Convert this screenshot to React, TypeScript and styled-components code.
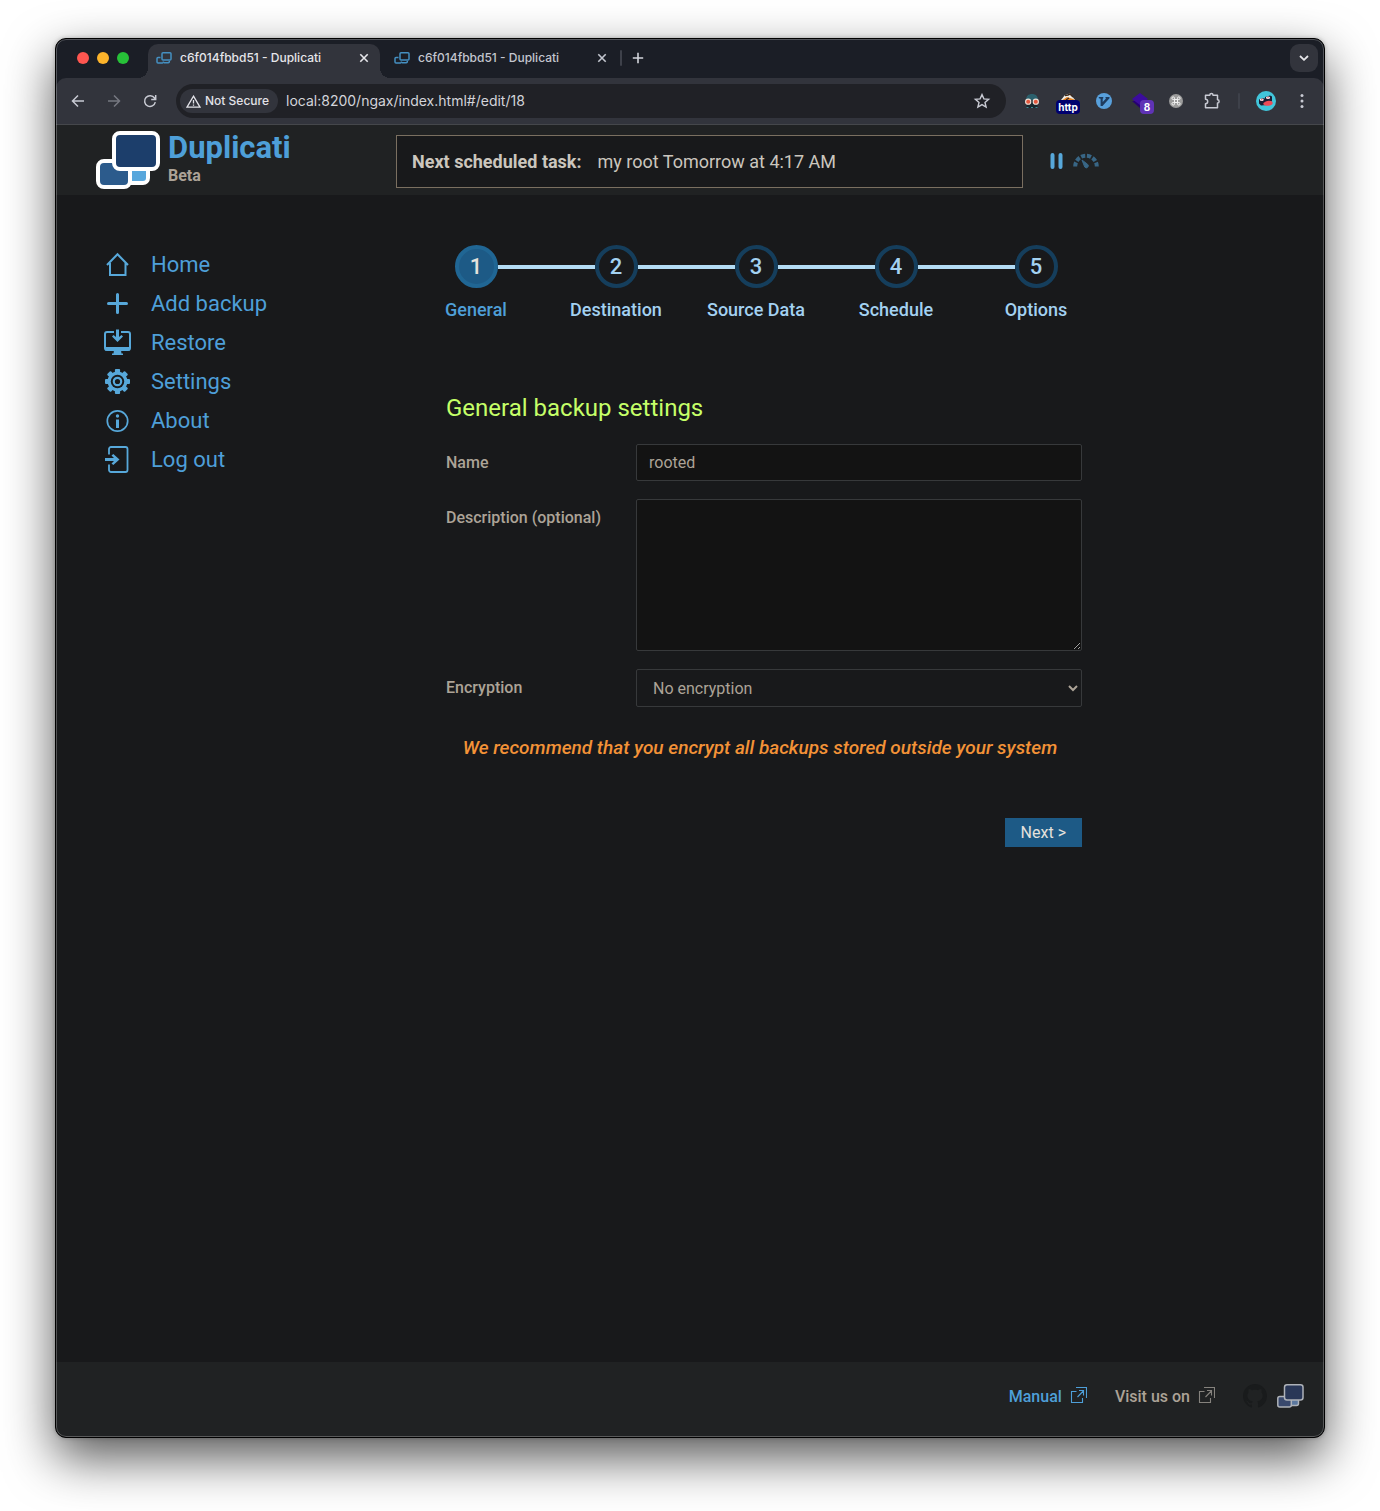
import React from "react";
import styled, { createGlobalStyle, css } from "styled-components";

const GlobalStyle = createGlobalStyle`
  *, *::before, *::after { box-sizing: border-box; }
  body { margin: 0; background: #fff; }
  button, input, select, textarea { font: inherit; color: inherit; margin: 0; }
  button { background: none; border: 0; padding: 0; cursor: pointer; }
  a { text-decoration: none; color: inherit; }
  svg { display: block; flex: none; }
`;

const chromeFont = `Inter, "Liberation Sans", sans-serif`;
const pageFont = `Roboto, "Noto Sans", sans-serif`;
const blue = "#4e9fd8";
const iconBlue = "#57a8da";

const Desktop = styled.div`
  min-height: 100vh;
  padding: 38px 55px 73px;
  display: flex;
  overflow: hidden;
`;

const Window = styled.div`
  flex: 1;
  min-width: 0;
  display: flex;
  flex-direction: column;
  border: 1px solid #000;
  border-radius: 11px;
  background: #18191b;
  box-shadow: 0 20px 50px rgba(0, 0, 0, 0.66), 0 0 4px rgba(0, 0, 0, 0.25);
  overflow: hidden;
  position: relative;

  &::after {
    content: "";
    position: absolute;
    inset: 0;
    border: 1px solid rgba(255, 255, 255, 0.25);
    border-radius: 10px;
    pointer-events: none;
  }
`;

/* Browser frame */

const TabStrip = styled.div`
  display: flex;
  align-items: center;
  height: 39px;
  padding: 0 6px 2px 21px;
  background: #1b1e26;
  font: 500 12px/16px ${chromeFont};
`;

const Lights = styled.div`
  display: flex;
  gap: 8px;
  width: 71px;
`;

const Light = styled.button<{ $color: string }>`
  width: 12px;
  height: 12px;
  border-radius: 50%;
  background: ${(p) => p.$color};
`;

const Tab = styled.div<{ $active?: boolean }>`
  display: flex;
  align-items: center;
  align-self: flex-end;
  gap: 8px;
  width: 232px;
  height: 34px;
  margin-bottom: -2px;
  padding: 0 10px 6px 8px;
  color: #c3c6cf;
  ${(p) =>
    p.$active &&
    css`
      position: relative;
      color: #e6e6ea;
      background: #32343c;
      border-radius: 10px 10px 0 0;
      &::before,
      &::after {
        content: "";
        position: absolute;
        bottom: 0;
        width: 10px;
        height: 10px;
      }
      &::before {
        left: -10px;
        background: radial-gradient(circle at 0 0, transparent 10px, #32343c 10px);
      }
      &::after {
        right: -10px;
        background: radial-gradient(circle at 100% 0, transparent 10px, #32343c 10px);
      }
    `}
`;

const TabTitle = styled.span`
  flex: 1;
  white-space: nowrap;
`;

const TabGap = styled.span`
  width: 6px;
`;

const NewTab = styled.button`
  padding: 6px 8px;
`;

const Divider = styled.span<{ $gap: number }>`
  width: 2px;
  height: 16px;
  margin: 0 ${(p) => p.$gap}px;
  border-radius: 1px;
  background: #3e414a;
`;

const TabMenu = styled.button`
  display: grid;
  place-items: center;
  width: 28px;
  height: 28px;
  margin-left: auto;
  border-radius: 9px;
  background: #32343c;
  color: #e6e6ea;
`;

const ToolbarBack = styled.div`
  background: #1b1e26;
`;

const Toolbar = styled.div`
  display: flex;
  align-items: center;
  height: 47px;
  padding: 0 12px;
  border-bottom: 1px solid #45474b;
  border-radius: 10px 10px 0 0;
  background: #32343c;
  color: #c8cad3;
  font-family: ${chromeFont};
`;

const NavButtons = styled.div`
  display: flex;
  gap: 16px;
`;

const IconButton = styled.button<{ $dim?: boolean }>`
  display: grid;
  place-items: center;
  position: relative;
  width: 20px;
  height: 24px;
  opacity: ${(p) => (p.$dim ? 0.45 : 1)};
`;

const AddressBar = styled.div`
  display: flex;
  align-items: center;
  flex: 1;
  gap: 8px;
  height: 34px;
  margin: 0 16px;
  padding: 0 14px 0 4px;
  border-radius: 17px;
  background: #202126;
`;

const Security = styled.button`
  display: flex;
  align-items: center;
  gap: 4px;
  height: 24px;
  padding: 0 9px 0 6px;
  border-radius: 12px;
  background: #32343c;
  color: #e2e2e8;
  font: 500 12px/16px ${chromeFont};
  white-space: nowrap;
`;

const Url = styled.input`
  flex: 1;
  min-width: 0;
  padding: 0;
  border: 0;
  outline: 0;
  background: none;
  color: #d3d4da;
  font: 400 14px/20px ${chromeFont};
`;

const Extensions = styled.div`
  display: flex;
  align-items: center;
  gap: 16px;
`;

const Badge = styled.span<{ $color: string; $wide?: boolean }>`
  position: absolute;
  top: 11px;
  left: ${(p) => (p.$wide ? -2 : 10)}px;
  width: ${(p) => (p.$wide ? 24 : 14)}px;
  height: 14px;
  border-radius: 4px;
  background: ${(p) => p.$color};
  color: #fff;
  font: 700 10px/14px ${chromeFont};
  text-align: center;
`;

const Profile = styled.div`
  display: flex;
  align-items: center;
  gap: 16px;
`;

/* Application */

const Page = styled.div`
  flex: 1;
  display: flex;
  flex-direction: column;
  font-family: ${pageFont};
  font-size: 16px;
  line-height: 20px;
  color: #aca397;
`;

const Header = styled.header`
  display: flex;
  align-items: center;
  min-height: 70px;
  padding: 2px 40px 0;
  background: #202223;
`;

const Brand = styled.a`
  display: flex;
  gap: 8px;
  width: 300px;
  padding-bottom: 2px;
`;

const BrandName = styled.span`
  display: block;
  color: ${blue};
  font-size: 31px;
  font-weight: 700;
  line-height: 34px;
`;

const BrandChannel = styled.span`
  display: block;
  font-size: 16px;
  font-weight: 700;
  line-height: 22px;
`;

const Status = styled.div`
  display: flex;
  align-items: center;
  gap: 16px;
  flex: 1;
  max-width: 627px;
  min-height: 53px;
  padding: 2px 15px 0;
  border: 1px solid #7a6f60;
  background: #18191b;
  color: #cbc6be;
  font-size: 18px;
  line-height: 24px;
`;

const HeaderActions = styled.div`
  display: flex;
  align-items: center;
  gap: 10px;
  margin-left: 27px;
  color: ${iconBlue};
`;

const Body = styled.div`
  flex: 1;
  display: flex;
  padding: 50px 40px;
`;

const Side = styled.nav`
  width: 310px;
`;

const SideList = styled.ul`
  list-style: none;
  margin: 0;
  padding: 0;
`;

const SideLink = styled.a`
  display: flex;
  align-items: center;
  gap: 20px;
  height: 39px;
  padding-left: 8px;
  color: ${blue};
  font-size: 22px;

  svg {
    color: ${iconBlue};
  }
`;

const Main = styled.main`
  flex: 1;
  max-width: 700px;
`;

const Steps = styled.ol`
  display: grid;
  grid-template-columns: repeat(5, 1fr);
  list-style: none;
  margin: 0;
  padding: 0;
`;

const StepRail = styled.span`
  display: flex;
  align-items: center;
  width: 100%;
`;

const Rail = styled.span<{ $hidden: boolean }>`
  flex: 1;
  height: 4px;
  background: ${(p) => (p.$hidden ? "transparent" : "#b3dcf5")};
`;

const StepDot = styled.span<{ $active: boolean }>`
  display: grid;
  place-items: center;
  width: 43px;
  height: 43px;
  border: 4px solid ${(p) => (p.$active ? "#206694" : "#153e5c")};
  border-radius: 50%;
  background: ${(p) => (p.$active ? "#1d5a86" : "transparent")};
  color: ${(p) => (p.$active ? "#e4e1dc" : "#a3d1f1")};
  font-size: 22px;
`;

const StepButton = styled.button<{ $active: boolean }>`
  display: flex;
  flex-direction: column;
  align-items: center;
  gap: 12px;
  width: 100%;
  color: ${(p) => (p.$active ? blue : "#a3d1f1")};
  font-size: 18px;
  font-weight: 500;
  line-height: 20px;
`;

const Form = styled.form`
  display: flex;
  flex-direction: column;
  gap: 18px;
  padding: 73px 24px 0 40px;
`;

const Heading = styled.h2`
  margin: 0 0 3px;
  color: #c5ff68;
  font-size: 24px;
  font-weight: 400;
  line-height: 30px;
`;

const Field = styled.div`
  display: grid;
  grid-template-columns: 190px 1fr;
  align-items: start;
`;

const Label = styled.label`
  padding-top: 9px;
  font-weight: 500;
`;

const control = css`
  display: block;
  width: 100%;
  border: 1px solid #37393b;
  border-radius: 2px;
  background: #131313;
  outline: 0;
`;

const TextInput = styled.input`
  ${control}
  height: 37px;
  padding: 0 12px;
`;

const TextArea = styled.textarea`
  ${control}
  height: 152px;
  padding: 8px 12px;
  resize: both;
  color-scheme: dark;
`;

const Select = styled.select`
  ${control}
  height: 38px;
  padding: 0 0 0 12px;
  background: #18191b;
`;

const Warning = styled.p`
  margin: 10px 0 0;
  padding-right: 8px;
  color: #f39237;
  font-size: 19px;
  font-style: italic;
  font-weight: 500;
  line-height: 26px;
  text-align: center;
`;

const NextButton = styled.button`
  align-self: flex-end;
  height: 29px;
  margin-top: 39px;
  padding: 0 16px;
  background: #1d5a86;
  color: #e4e1dc;
`;

const Footer = styled.footer`
  display: flex;
  align-items: center;
  justify-content: flex-end;
  gap: 28px;
  min-height: 75px;
  padding: 0 20px 8px;
  background: #202223;
`;

const footerText = css`
  display: flex;
  align-items: center;
  gap: 8px;
  font-weight: 500;
  line-height: 24px;

  span {
    padding-top: 2px;
  }
`;

const FooterItem = styled.span`
  ${footerText}
`;

const FooterLink = styled.a`
  ${footerText}
  color: ${blue};
`;

const Socials = styled.div`
  display: flex;
  align-items: center;
  gap: 10px;
`;

/* Icons */

const Favicon = () => (
  <svg width="16" height="16" viewBox="0 0 16 16" fill="none" stroke="#4590c2" strokeWidth="1.5">
    <rect x="6" y="2.8" width="9" height="7.2" rx="1" />
    <path d="M4.5 7.5H2a1 1 0 0 0-1 1V12a1 1 0 0 0 1 1h4.400a1 1 0 0 0 1-1v-.5M8 12.800h4.300a1 1 0 0 0 1-1V11" />
  </svg>
);

const Cross = () => (
  <svg width="12" height="12" viewBox="0 0 12 12" stroke="currentColor" strokeWidth="1.6">
    <path d="M2.3 2.3l7.4 7.4M9.7 2.3L2.3 9.7" />
  </svg>
);

const Logo = () => (
  <svg width="64" height="58" viewBox="0 0 64 58" stroke="#fff" strokeWidth="4">
    <rect x="26" y="30" width="26" height="22" rx="5" fill="#58a7dc" />
    <rect x="2" y="30" width="32" height="26" rx="6" fill="#2c5b8c" />
    <rect x="18" y="2" width="44" height="36" rx="6" fill="#1c3e6b" />
  </svg>
);

const ExternalIcon = ({ color }: { color: string }) => (
  <svg width="17" height="20" viewBox="0 0 17 20" fill="none" stroke={color} strokeWidth="1.1">
    <path d="M6.500 5.500H1.500v11h11V12M6 1.500h10.500v10.500M7.500 11l5.800-6M9 4.500h4.500v5" />
  </svg>
);

const icons: Record<string, React.ReactNode> = {
  home: (
    <path d="M3 14L13.500 3.200 24 14M6 12v12h15.500V12" fill="none" stroke="currentColor" strokeWidth="2" />
  ),
  add: (
    <path d="M13.500 4.500v18M4.500 13.500h18" stroke="currentColor" strokeWidth="3" strokeLinecap="round" />
  ),
  restore: (
    <>
      <path d="M10 3H3a2 2 0 0 0-2 2v14a2 2 0 0 0 2 2h21a2 2 0 0 0 2-2V5a2 2 0 0 0-2-2h-7" fill="none" stroke="currentColor" strokeWidth="2" />
      <path d="M1 18h25v3.500H1zM10 21h7l.5 3.500H19V26H8v-1.500h1.500z" fill="currentColor" />
      <path d="M12 .5h3V8l2.500-2L19 7.500 13.500 13 8 7.500 9.500 6 12 8z" fill="currentColor" />
    </>
  ),
  settings: (
    <>
      <g fill="currentColor">
        {[0, 45, 90, 135].map((a) => (
          <rect key={a} x="10.900" y="1" width="5.200" height="25" rx="1" transform={`rotate(${a} 13.5 13.5)`} />
        ))}
        <circle cx="13.500" cy="13.500" r="10" />
      </g>
      <circle cx="13.500" cy="13.500" r="6.700" fill="#18191b" />
      <circle cx="13.500" cy="13.500" r="3.700" fill="none" stroke="currentColor" strokeWidth="2.200" />
    </>
  ),
  about: (
    <>
      <circle cx="13.500" cy="14" r="10.200" fill="none" stroke="currentColor" strokeWidth="1.700" />
      <path d="M12 12.500h3V21h-3z" fill="currentColor" />
      <circle cx="13.500" cy="9" r="1.700" fill="currentColor" />
    </>
  ),
  logout: (
    <>
      <path d="M5 8.500V3a2 2 0 0 1 2-2h14.500a2 2 0 0 1 2 2v21a2 2 0 0 1-2 2H7a2 2 0 0 1-2-2v-5.500" fill="none" stroke="currentColor" strokeWidth="1.800" />
      <path d="M1 12h9L7.500 9.500 9.300 8l6.200 5.500L9.300 19l-1.800-1.500L10 15H1z" fill="currentColor" />
    </>
  ),
};

const MenuIcon = ({ name }: { name: string }) => (
  <svg width="27" height="27" viewBox="0 0 27 27">
    {icons[name]}
  </svg>
);

const PauseIcon = () => (
  <svg width="13" height="18" viewBox="0 0 13 18" stroke="currentColor" strokeWidth="4" strokeLinecap="round">
    <path d="M2.500 3v12M10.500 3v12" />
  </svg>
);

const GaugeIcon = () => (
  <svg width="26" height="16" viewBox="0 0 26 16" fill="none" stroke="#386685">
    <path d="M2.200 13.500A10.800 10.800 0 0 1 23.800 13.500" strokeWidth="4" strokeDasharray="4.200 1.740" />
    <path d="M9 7l5.500 4.200a2 2 0 1 1-2.800 2.800z" fill="#386685" strokeWidth="1" strokeLinejoin="round" />
  </svg>
);

const GitHubMark = () => (
  <svg width="24" height="24" viewBox="0 0 16 16" fill="#191b1c">
    <path d="M8 0C3.580 0 0 3.580 0 8c0 3.540 2.290 6.530 5.470 7.590.4.070.55-.17.55-.38 0-.19-.01-.82-.01-1.490-2.010.37-2.530-.49-2.690-.94-.09-.23-.48-.94-.82-1.130-.28-.15-.68-.52-.01-.53.63-.01 1.080.58 1.230.82.72 1.210 1.870.87 2.330.66.070-.52.28-.87.51-1.070-1.780-.2-3.640-.89-3.640-3.950 0-.87.31-1.590.82-2.150-.08-.2-.36-1.020.08-2.120 0 0 .67-.21 2.200.82.64-.18 1.320-.27 2-.27s1.360.09 2 .27c1.530-1.040 2.200-.82 2.200-.82.44 1.100.16 1.920.08 2.120.51.56.82 1.270.82 2.150 0 3.070-1.870 3.750-3.650 3.950.29.25.54.73.54 1.480 0 1.070-.01 1.930-.01 2.200 0 .21.15.46.55.38A8.010 8.010 0 0 0 16 8c0-4.420-3.580-8-8-8z" />
  </svg>
);

const ForumMark = () => (
  <svg width="27" height="24" viewBox="0 0 27 24" stroke="#aeb2b8" strokeWidth="1.500">
    <rect x="11" y="13" width="10.500" height="8.500" rx="2" fill="#5b789f" />
    <rect x=".8" y="12.500" width="13.500" height="10.500" rx="2" fill="#39496d" />
    <rect x="7.500" y=".8" width="18.500" height="15.200" rx="2.500" fill="#293757" />
  </svg>
);

const menu = [
  ["home", "Home"],
  ["add", "Add backup"],
  ["restore", "Restore"],
  ["settings", "Settings"],
  ["about", "About"],
  ["logout", "Log out"],
];

const steps = ["General", "Destination", "Source Data", "Schedule", "Options"];

const BrowserTab = ({ active }: { active?: boolean }) => (
  <Tab $active={active}>
    <Favicon />
    <TabTitle>c6f014fbbd51 - Duplicati</TabTitle>
    <button aria-label="Close tab">
      <Cross />
    </button>
  </Tab>
);

const BrowserChrome = () => (
  <>
    <TabStrip>
      <Lights>
        <Light $color="#ff5650" aria-label="Close" />
        <Light $color="#fdb42b" aria-label="Minimize" />
        <Light $color="#27c138" aria-label="Zoom" />
      </Lights>
      <BrowserTab active />
      <TabGap />
      <BrowserTab />
      <Divider $gap={2} />
      <NewTab aria-label="New tab">
        <svg width="12" height="12" viewBox="0 0 12 12" stroke="#d3d5dc" strokeWidth="1.600">
          <path d="M6 .8v10.400M.8 6h10.400" />
        </svg>
      </NewTab>
      <TabMenu aria-label="Search tabs">
        <svg width="10" height="6" viewBox="0 0 10 6" fill="none" stroke="currentColor" strokeWidth="1.800">
          <path d="M1 1l4 3.800L9 1" />
        </svg>
      </TabMenu>
    </TabStrip>
    <ToolbarBack>
      <Toolbar>
        <NavButtons>
          <IconButton aria-label="Back">
            <svg width="14" height="14" viewBox="0 0 14 14" fill="none" stroke="currentColor" strokeWidth="1.500">
              <path d="M13 7H2M7 1.500L1.500 7 7 12.500" />
            </svg>
          </IconButton>
          <IconButton aria-label="Forward" $dim>
            <svg width="14" height="14" viewBox="0 0 14 14" fill="none" stroke="currentColor" strokeWidth="1.500">
              <path d="M1 7h11M7 1.500L12.500 7 7 12.500" />
            </svg>
          </IconButton>
          <IconButton aria-label="Reload">
            <svg width="14" height="14" viewBox="0 0 14 14" fill="none" stroke="currentColor" strokeWidth="1.500">
              <path d="M12.300 8.200A5.400 5.400 0 1 1 11.500 4L12.500 5.300M12.700 1v4.500H8.200" />
            </svg>
          </IconButton>
        </NavButtons>
        <AddressBar>
          <Security>
            <svg width="15" height="13" viewBox="0 0 15 13" fill="none" stroke="currentColor" strokeWidth="1.300">
              <path d="M7.500 1.200L14 12.200H1zM7.500 5v3.500M7.500 9.500v1.300" />
            </svg>
            Not Secure
          </Security>
          <Url aria-label="Address" defaultValue="local:8200/ngax/index.html#/edit/18" />
          <button aria-label="Bookmark">
            <svg width="20" height="16" viewBox="0 0 20 16" fill="none" stroke="currentColor" strokeWidth="1.400">
              <path d="M10 1.600l1.900 4.300 4.700.4-3.600 3.100 1.100 4.600L10 11.600 5.900 14 7 9.400 3.400 6.300l4.700-.4z" />
            </svg>
          </button>
        </AddressBar>
        <Extensions>
          <IconButton aria-label="Spy extension">
            <svg width="16" height="16" viewBox="0 0 16 16">
              <path d="M2 7C2 3 4.500 1 8 1s6 2 6 6z" fill="#2b606d" />
              <path d="M2.500 8h11v7h-11z" fill="#17272e" />
              <circle cx="4.200" cy="8.700" r="2.600" fill="#e4573d" stroke="#eadfd6" strokeWidth="1.100" />
              <circle cx="11.800" cy="8.700" r="2.600" fill="#e4573d" stroke="#eadfd6" strokeWidth="1.100" />
              <path d="M2.500 14.500h2M7 14.500h2M11.500 14.500h2" stroke="#3d8791" />
            </svg>
          </IconButton>
          <IconButton aria-label="Redirect extension">
            <svg width="16" height="16" viewBox="0 0 16 16">
              <path d="M1 7l4-5 5-1.500L15 7z" fill="#f0ede6" />
              <path d="M1 8l6-4 6 2 2 1-1 2H1z" fill="#e78424" />
              <path d="M5 2.500l3-.5 2-1 3 3M6 7l3-2" stroke="#3a2a20" strokeWidth="1.400" fill="none" />
            </svg>
            <Badge $color="#00006e" $wide>http</Badge>
          </IconButton>
          <IconButton aria-label="Vimium">
            <svg width="16" height="16" viewBox="0 0 16 16">
              <circle cx="8" cy="8" r="8" fill="#58a0dc" />
              <path d="M2.800 4h4.500v1.200l-.6.500V9l3.300-3.500-.5-.5V4h4v1.300L6.500 13H4.600V5.700l-1.800-.5z" fill="#1e3c5f" />
            </svg>
          </IconButton>
          <IconButton aria-label="Layers extension">
            <svg width="18" height="18" viewBox="0 0 18 18">
              <path d="M1 9l8 7 8-7z" fill="#260070" />
              <path d="M9 1l8 6-8 6-8-6z" fill="#3c0c9e" />
            </svg>
            <Badge $color="#5f33b5">8</Badge>
          </IconButton>
          <IconButton aria-label="Shortcuts">
            <svg width="14" height="14" viewBox="0 0 14 14">
              <circle cx="7" cy="7" r="7" fill="#9b9b9b" />
              <path d="M5.500 5.500h3v3h-3zM5.500 5.500H4.200A1.300 1.300 0 1 1 5.500 4.200zM8.500 5.500V4.200a1.300 1.300 0 1 1 1.300 1.300zM8.500 8.500h1.300a1.300 1.300 0 1 1-1.300 1.300zM5.500 8.500v1.300a1.300 1.300 0 1 1-1.300-1.300z" fill="none" stroke="#f2f2f2" />
            </svg>
          </IconButton>
          <IconButton aria-label="Extensions">
            <svg width="18" height="18" viewBox="0 0 18 18" fill="none" stroke="currentColor" strokeWidth="1.500" strokeLinejoin="round">
              <path d="M2.500 3.200h4.300a1.600 1.600 0 0 1 3.200 0h4.500v4.600a1.600 1.600 0 0 1 0 3.200v4.700h-12v-4a2.200 2.200 0 0 0 0-4.400z" />
            </svg>
          </IconButton>
        </Extensions>
        <Divider $gap={16} />
        <Profile>
          <IconButton aria-label="Profile">
            <svg width="20" height="20" viewBox="0 0 20 20">
              <circle cx="10" cy="10" r="10" fill="#41c5da" />
              <path d="M3 8.500l3-1.500 3 .5V6l5-1.500 2 1V10l-5 4-6 .5-2-2z" fill="#1c1d33" />
              <ellipse cx="5.800" cy="8.800" rx="1.900" ry="1.200" fill="#fff" />
              <ellipse cx="12" cy="6.800" rx="2" ry="1.200" fill="#fff" />
              <circle cx="5.800" cy="8.800" r=".7" fill="#ee4b56" />
              <circle cx="12" cy="6.800" r=".7" fill="#ee4b56" />
              <path d="M7 13c2-3 6-4 9-2.500 1.500 1.500.5 3.500-2 4-3 .5-5 .5-7-1.500z" fill="#ee4b56" />
            </svg>
          </IconButton>
          <IconButton aria-label="Menu">
            <svg width="4" height="16" viewBox="0 0 4 16" fill="currentColor">
              <circle cx="2" cy="2.500" r="1.500" />
              <circle cx="2" cy="8" r="1.500" />
              <circle cx="2" cy="13.500" r="1.500" />
            </svg>
          </IconButton>
        </Profile>
      </Toolbar>
    </ToolbarBack>
  </>
);

export default function App() {
  return (
    <>
      <GlobalStyle />
      <Desktop>
        <Window>
          <BrowserChrome />
          <Page>
            <Header>
              <Brand href="#/">
                <Logo />
                <span>
                  <BrandName>Duplicati</BrandName>
                  <BrandChannel>Beta</BrandChannel>
                </span>
              </Brand>
              <Status>
                <strong>Next scheduled task:</strong>
                <span>my root Tomorrow at 4:17 AM</span>
              </Status>
              <HeaderActions>
                <button aria-label="Pause">
                  <PauseIcon />
                </button>
                <button aria-label="Throttle">
                  <GaugeIcon />
                </button>
              </HeaderActions>
            </Header>
            <Body>
              <Side>
                <SideList>
                  {menu.map(([icon, label]) => (
                    <li key={icon}>
                      <SideLink href={`#/${icon}`}>
                        <MenuIcon name={icon} />
                        {label}
                      </SideLink>
                    </li>
                  ))}
                </SideList>
              </Side>
              <Main>
                <Steps>
                  {steps.map((name, i) => (
                    <li key={name}>
                      <StepButton $active={i === 0}>
                        <StepRail>
                          <Rail $hidden={i === 0} />
                          <StepDot $active={i === 0}>{i + 1}</StepDot>
                          <Rail $hidden={i === steps.length - 1} />
                        </StepRail>
                        {name}
                      </StepButton>
                    </li>
                  ))}
                </Steps>
                <Form onSubmit={(e) => e.preventDefault()}>
                  <Heading>General backup settings</Heading>
                  <Field>
                    <Label htmlFor="name">Name</Label>
                    <TextInput id="name" defaultValue="rooted" />
                  </Field>
                  <Field>
                    <Label htmlFor="description">Description (optional)</Label>
                    <TextArea id="description" />
                  </Field>
                  <Field>
                    <Label htmlFor="encryption">Encryption</Label>
                    <Select id="encryption" defaultValue="none">
                      <option value="none">No encryption</option>
                      <option value="aes">AES-256 encryption, built in</option>
                    </Select>
                  </Field>
                  <Warning>We recommend that you encrypt all backups stored outside your system</Warning>
                  <NextButton type="submit">Next &gt;</NextButton>
                </Form>
              </Main>
            </Body>
            <Footer>
              <FooterLink href="#manual">
                <span>Manual</span>
                <ExternalIcon color={blue} />
              </FooterLink>
              <FooterItem>
                <span>Visit us on</span>
                <ExternalIcon color="#85827d" />
              </FooterItem>
              <Socials>
                <a href="#github" aria-label="GitHub">
                  <GitHubMark />
                </a>
                <a href="#forum" aria-label="Forum">
                  <ForumMark />
                </a>
              </Socials>
            </Footer>
          </Page>
        </Window>
      </Desktop>
    </>
  );
}
